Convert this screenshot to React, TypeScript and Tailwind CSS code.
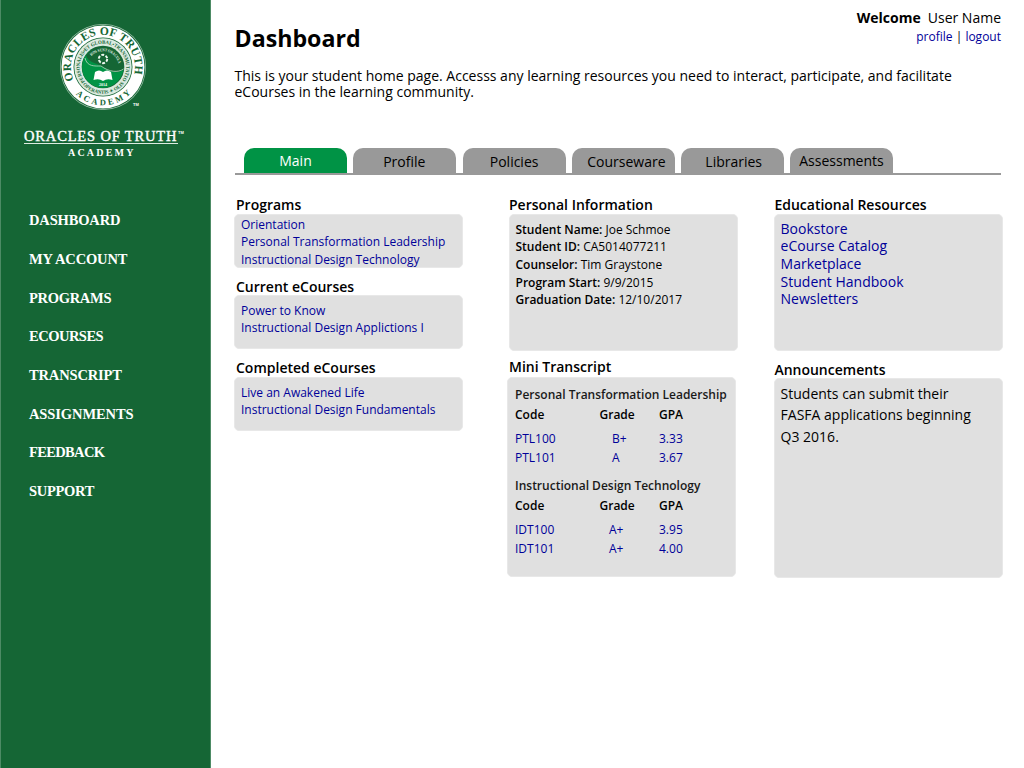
import type { ReactNode } from "react";

const nav = [
  { label: "DASHBOARD", cls: "h-[39px] tracking-[-0.15px]" },
  { label: "MY ACCOUNT", cls: "h-[39px] tracking-[-0.15px]" },
  { label: "PROGRAMS", cls: "h-[38px] pt-px tracking-[-0.3px]" },
  { label: "ECOURSES", cls: "h-[39px] tracking-[-0.5px]" },
  { label: "TRANSCRIPT", cls: "h-[39px] tracking-[-0.15px]" },
  { label: "ASSIGNMENTS", cls: "h-[38px] pt-px tracking-[-0.1px]" },
  { label: "FEEDBACK", cls: "h-[39px] tracking-[-0.65px]" },
  { label: "SUPPORT", cls: "h-[39px] tracking-[-0.3px]" },
];

const tabs = [
  { label: "Main", cls: "h-[25px] bg-[#009345] text-white" },
  { label: "Profile", cls: "h-[25px] bg-[#999999] pt-px pr-px" },
  { label: "Policies", cls: "h-[25px] bg-[#999999] pt-px" },
  { label: "Courseware", cls: "h-[25px] bg-[#999999] pl-[6px] pt-px" },
  { label: "Libraries", cls: "h-[25px] bg-[#999999] pt-px pl-[2px]" },
  { label: "Assessments", cls: "h-[25.5px] bg-[#999999] pr-px" },
];

function Seal() {
  return (
    <svg width="90" height="88" viewBox="-45 -44 90 88" className="block" fontFamily="'Liberation Serif', serif">
      <defs>
        <path id="outerTop" d="M-29.2 13 A32 32 0 1 1 29.2 13" />
        <path id="outerBottom" d="M-38.3 0 A38.3 38.3 0 0 0 38.3 0" />
        <path id="midTop" d="M-18 14.6 A23.2 23.2 0 1 1 18 14.6" />
        <path id="midBottom" d="M-26.8 0 A26.8 26.8 0 0 0 26.8 0" />
        <path id="inner" d="M-11.5 -11 A16 16 0 0 1 15.5 4" />
      </defs>
      <circle r="43" fill="#9dc0aa" />
      <circle r="42.3" fill="#156635" />
      <circle r="41.5" fill="#fff" />
      <circle r="29.5" fill="#156635" />
      <circle r="28.7" fill="#dbeae0" />
      <circle r="21.3" fill="#156635" />
      <path d="M-8 -19.5 A21 21 0 0 0 -5 20.3 A21 21 0 0 0 20.5 2 C15 9 4 3 0 0 C-6 -4 -15 -4 -17 -12 Q-12 -18 -8 -19.5Z" fill="#009345" />
      <path d="M-18 -9 C-16 0 -8 -1 -2 -1 C6 5 15 6 20.5 2" fill="none" stroke="#b7d9c2" strokeWidth=".8" />
      <circle cx="0" cy="-8" r="4.2" fill="none" stroke="#eef7f0" strokeWidth="2" strokeDasharray="2.9 1.5" />
      <path d="M-8 5 Q-4 2 0 5 Q4 2 8 5 L9.5 13 Q4 11 0 14 Q-4 11 -9.5 13Z" fill="#fff" />
      <g fill="#156635" fontWeight="700">
        <text fontSize="11.5"><textPath href="#outerTop" textLength="121">ORACLES OF TRUTH</textPath></text>
        <text fontSize="8.5"><textPath href="#outerBottom" startOffset="30" textLength="61">ACADEMY</textPath></text>
        <text fontSize="5.2"><textPath href="#midTop" textLength="102" lengthAdjust="spacingAndGlyphs">PERSONALIS•ET GLOBAL•TRANSMUTATIO</textPath></text>
        <text fontSize="5"><textPath href="#midBottom" startOffset="19" textLength="47" lengthAdjust="spacingAndGlyphs">OPERANTIS ✦ OLIS</textPath></text>
      </g>
      <text fontSize="4.2" fontWeight="700" fill="#e4f1e8"><textPath href="#inner" textLength="34" lengthAdjust="spacingAndGlyphs">HOS SUNT ORACULA</textPath></text>
      <text x="-4" y="18.5" fontSize="4" fontWeight="700" fill="#fff">2014</text>
      <text x="30" y="39" fontSize="4" fontWeight="700" fill="#fff" fontFamily="'Liberation Sans', sans-serif">TM</text>
    </svg>
  );
}

function Panel({ className, children }: { className: string; children?: ReactNode }) {
  return <div className={"w-[229px] shrink-0 rounded-[5px] border border-[#e8e8e8] bg-[#e0e0e0] " + className}>{children}</div>;
}

function Heading({ className = "", children }: { className?: string; children: ReactNode }) {
  return <h2 className={"whitespace-nowrap text-[14px] font-semibold leading-5 " + className}>{children}</h2>;
}

const link = "block whitespace-nowrap text-[#000099]";

type Row = [string, string, string, string];
function Transcript({ title, rows, className = "" }: { title: string; rows: Row[]; className?: string }) {
  return (
    <section className={className}>
      <h3 className="h-5 whitespace-nowrap text-[12px] font-semibold leading-5 text-[#1a1a1a]">{title}</h3>
      <div className="flex h-[22px] text-[12px] font-semibold leading-5">
        <span className="w-[84.5px]">Code</span>
        <span className="w-[59.5px]">Grade</span>
        <span>GPA</span>
      </div>
      {rows.map(([code, grade, gpa, pad]) => (
        <div key={code} className="flex h-[19px] text-[12px] leading-6 text-[#000099]">
          <span className="w-[84px]">{code}</span>
          <span className={"w-[60px] " + pad}>{grade}</span>
          <span>{gpa}</span>
        </div>
      ))}
    </section>
  );
}

export default function App() {
  return (
    <div className="flex h-[768px] w-[1024px] overflow-hidden bg-white font-['Open_Sans','Noto_Sans',sans-serif] text-black">
      <aside className="w-[211px] shrink-0 border-x border-[#4d8b65] bg-[#156635] pt-[23px] text-white">
        <div className="pl-[57px]"><Seal /></div>
        <div className="ml-[23px] mt-[17px] w-[165px] font-['Liberation_Serif',serif]">
          <div className="flex h-[16px] items-start">
            <span className="h-[16px] w-[154px] shrink-0 whitespace-nowrap border-b border-[#dcebe1] text-[14.5px] leading-4 tracking-[0.84px] [-webkit-text-stroke:0.4px_white]">ORACLES OF TRUTH</span>
            <span className="pt-[2px] font-['Liberation_Sans',sans-serif] text-[4px] font-bold leading-[5px]">TM</span>
          </div>
          <div className="pl-[44px] pt-[3px] text-[10px] font-bold leading-3 tracking-[2.2px]">ACADEMY</div>
        </div>
        <nav className="mt-[42px] pl-[28px] font-['Liberation_Serif',serif] text-[14.5px] font-bold">
          {nav.map((item) => (
            <a key={item.label} className={"flex items-center whitespace-nowrap " + item.cls}>{item.label}</a>
          ))}
        </nav>
      </aside>
      <main className="flex w-[813px] flex-col pl-[24px]">
        <header className="flex h-[66px] justify-between pr-[23px]">
          <h1 className="-ml-[0.5px] pt-[20px] text-[23.2px] font-bold leading-9">Dashboard</h1>
          <div className="pt-[8px] text-right">
            <div className="text-[14px] leading-5"><b>Welcome</b><span className="pl-[7px]">User Name</span></div>
            <div className="text-[12px] leading-[18px]"><a className="text-[#000099]">profile</a> | <a className="text-[#000099]">logout</a></div>
          </div>
        </header>
        <p className="-ml-[0.5px] h-[81px] whitespace-nowrap pt-[2px] text-[14px] leading-4">
          This is your student home page. Accesss any learning resources you need to interact, participate, and facilitate<br />
          eCourses in the learning community.
        </p>
        <div className="flex h-[28px] w-[766px] items-end gap-[6.3px] border-b-2 border-[#999999] pl-[9px]">
          {tabs.map((t) => (
            <div key={t.label} className={"flex w-[103px] items-center justify-center rounded-t-[10px] text-[14px] " + t.cls}>{t.label}</div>
          ))}
        </div>
        <div className="flex pt-[20px]">
          <div className="flex w-[274px] flex-col">
            <Heading className="pl-px">Programs</Heading>
            <Panel className="-ml-px mt-[-1px] h-[54px] pl-[6px] pt-[0.8px] text-[12px] leading-[17.6px]">
              <a className={link}>Orientation</a>
              <a className={link}>Personal Transformation Leadership</a>
              <a className={link}>Instructional Design Technology</a>
            </Panel>
            <Heading className="mt-[9px] pl-px">Current eCourses</Heading>
            <Panel className="-ml-px mt-[-2px] h-[54px] pl-[6px] pt-[6px] text-[12px] leading-[17px]">
              <a className={link}>Power to Know</a>
              <a className={link}>Instructional Design Applictions I</a>
            </Panel>
            <Heading className="mt-[9px] pl-px">Completed eCourses</Heading>
            <Panel className="-ml-px mt-[-1px] h-[54px] pl-[6px] pt-[6px] text-[12px] leading-[17px]">
              <a className={link}>Live an Awakened Life</a>
              <a className={link}>Instructional Design Fundamentals</a>
            </Panel>
          </div>
          <div className="flex w-[265.4px] flex-col">
            <Heading>Personal Information</Heading>
            <Panel className="mt-[-1px] h-[137px] whitespace-nowrap pl-[5.5px] pt-[5.8px] text-[12px] leading-[17.6px]">
              <div><b className="font-semibold">Student Name:</b> Joe Schmoe</div>
              <div><b className="font-semibold">Student ID:</b> CA5014077211</div>
              <div><b className="font-semibold">Counselor:</b> Tim Graystone</div>
              <div><b className="font-semibold">Program Start:</b> 9/9/2015</div>
              <div><b className="font-semibold">Graduation Date:</b> 12/10/2017</div>
            </Panel>
            <Heading className="mt-[6px]">Mini Transcript</Heading>
            <Panel className="-ml-[2px] h-[200px] pl-[7px] pt-[7px]">
              <Transcript title="Personal Transformation Leadership" rows={[["PTL100", "B+", "3.33", "pl-[13px]"], ["PTL101", "A", "3.67", "pl-[13px]"]]} />
              <Transcript className="mt-[11px]" title="Instructional Design Technology" rows={[["IDT100", "A+", "3.95", "pl-[10px]"], ["IDT101", "A+", "4.00", "pl-[10px]"]]} />
            </Panel>
          </div>
          <div className="flex w-[229px] flex-col">
            <Heading>Educational Resources</Heading>
            <Panel className="mt-[-1px] h-[137px] pl-[5.2px] pt-[4.8px] text-[14px] leading-[17.6px]">
              {["Bookstore", "eCourse Catalog", "Marketplace", "Student Handbook", "Newsletters"].map((x) => <a key={x} className={link}>{x}</a>)}
            </Panel>
            <Heading className="mt-[9px]">Announcements</Heading>
            <Panel className="mt-[-2px] h-[200px] pl-[5.2px] pt-[4px] text-[14px] leading-[21.4px]">
              <p className="whitespace-nowrap">Students can submit their<br />FASFA applications beginning<br />Q3 2016.</p>
            </Panel>
          </div>
        </div>
      </main>
    </div>
  );
}
